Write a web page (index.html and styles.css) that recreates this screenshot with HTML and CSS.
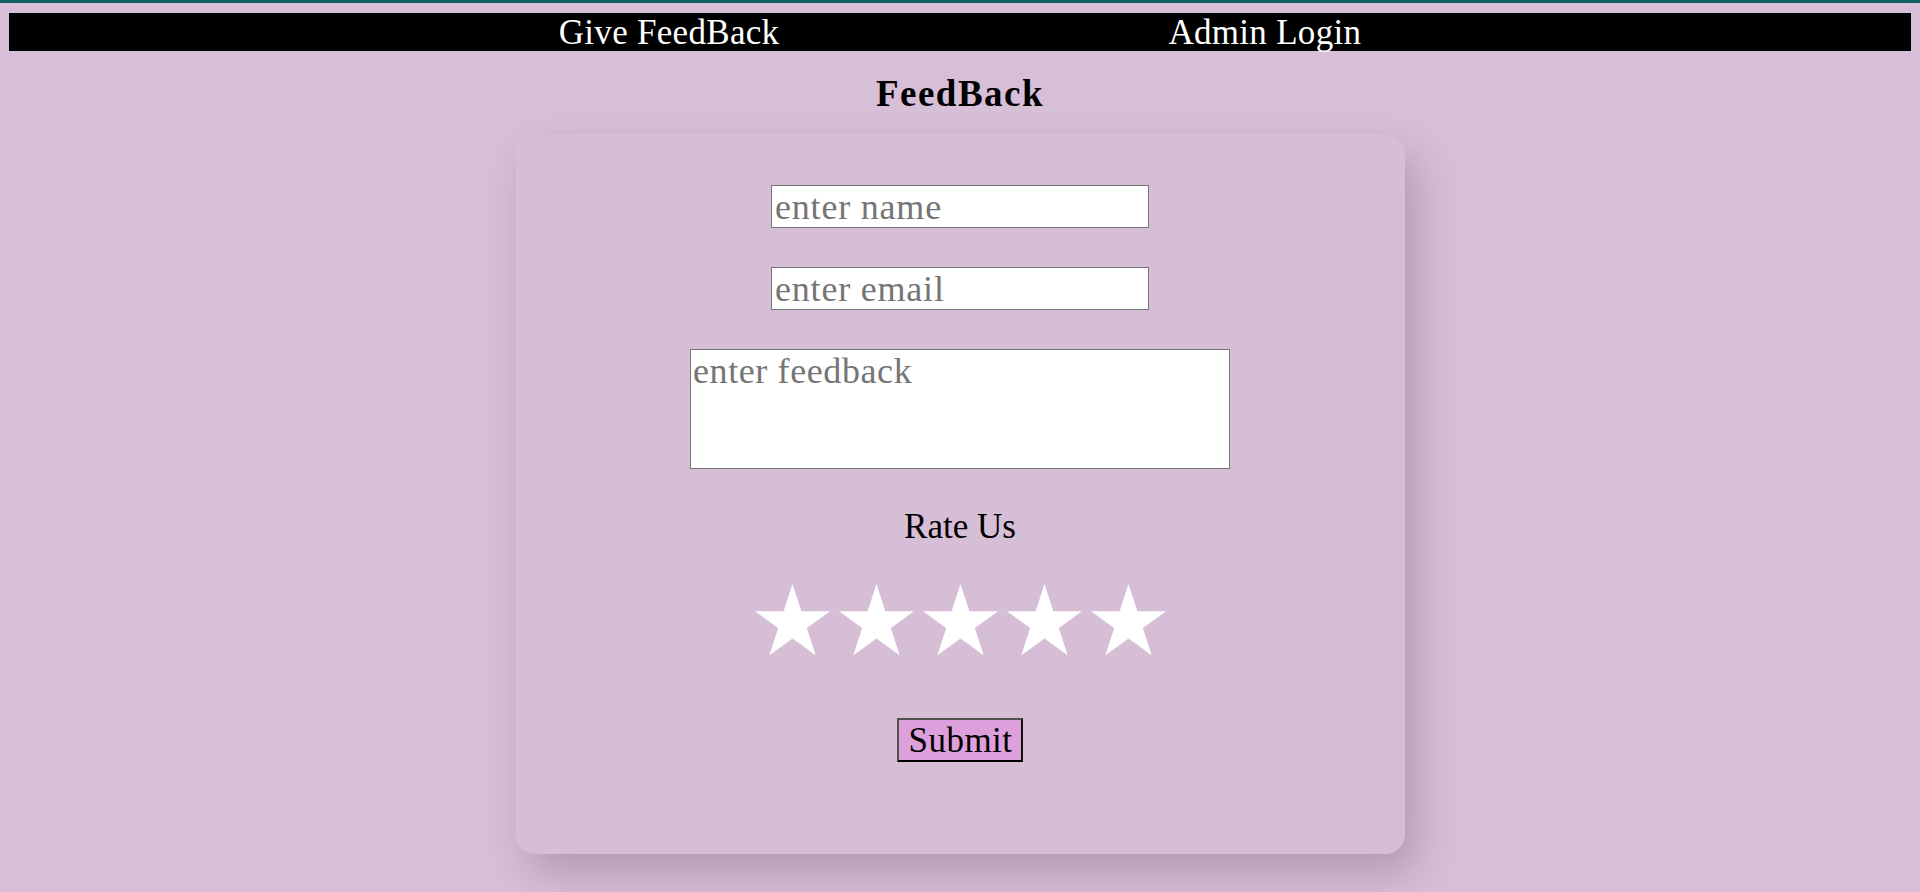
FILE: index.html
```html
<!DOCTYPE html>
<html lang="en">
<head>
<meta charset="utf-8">
<title>FeedBack</title>
<link rel="stylesheet" href="styles.css">
</head>
<body>
<div class="topline"></div>
<nav class="nav">
  <a class="nav-link" href="#">Give FeedBack</a>
  <a class="nav-link" href="#">Admin Login</a>
</nav>
<h1 class="title">FeedBack</h1>
<form class="card">
  <input class="field" type="text" placeholder="enter name">
  <input class="field field-email" type="email" placeholder="enter email">
  <textarea class="area" placeholder="enter feedback"></textarea>
  <div class="rate">Rate Us</div>
  <div class="stars">
    <svg class="star" viewBox="0 0 75 72"><polygon points="37.5,0 46.35,27.22 74.97,27.23 51.81,44.05 60.66,71.27 37.5,54.45 14.34,71.27 23.19,44.05 0.03,27.23 28.65,27.22"/></svg>
    <svg class="star" viewBox="0 0 75 72"><polygon points="37.5,0 46.35,27.22 74.97,27.23 51.81,44.05 60.66,71.27 37.5,54.45 14.34,71.27 23.19,44.05 0.03,27.23 28.65,27.22"/></svg>
    <svg class="star" viewBox="0 0 75 72"><polygon points="37.5,0 46.35,27.22 74.97,27.23 51.81,44.05 60.66,71.27 37.5,54.45 14.34,71.27 23.19,44.05 0.03,27.23 28.65,27.22"/></svg>
    <svg class="star" viewBox="0 0 75 72"><polygon points="37.5,0 46.35,27.22 74.97,27.23 51.81,44.05 60.66,71.27 37.5,54.45 14.34,71.27 23.19,44.05 0.03,27.23 28.65,27.22"/></svg>
    <svg class="star" viewBox="0 0 75 72"><polygon points="37.5,0 46.35,27.22 74.97,27.23 51.81,44.05 60.66,71.27 37.5,54.45 14.34,71.27 23.19,44.05 0.03,27.23 28.65,27.22"/></svg>
  </div>
  <button class="submit" type="button">Submit</button>
</form>
</body>
</html>
```
FILE: styles.css
```css
html, body {
  margin: 0;
  padding: 0;
}
body {
  background: #d8bfd8;
  font-family: "Liberation Serif", "Times New Roman", serif;
  color: #000;
  height: 892px;
  overflow: hidden;
}
.topline {
  height: 3px;
  background: #106068;
}
.nav {
  margin: 10px 9px 0;
  height: 38px;
  background: #000;
  display: flex;
  justify-content: center;
  gap: 389px;
}
.nav-link {
  color: #fff;
  text-decoration: none;
  font-size: 35px;
  letter-spacing: 0.3px;
  line-height: 39px;
}
.title {
  margin: 23px 0 20px;
  font-size: 37px;
  line-height: 40px;
  letter-spacing: 1.5px;
  font-weight: bold;
  text-align: center;
}
.card {
  box-sizing: border-box;
  width: 889px;
  height: 720px;
  margin: 0 auto;
  padding-top: 51px;
  border-radius: 20px;
  background: #d7bed7;
  box-shadow: 12px 20px 40px rgba(60, 20, 60, 0.22);
  display: flex;
  flex-direction: column;
  align-items: center;
}
.field {
  box-sizing: border-box;
  width: 378px;
  height: 43px;
  margin: 0 0 39px;
  padding: 0 3px;
  border: 1px solid #767676;
  background: #fff;
  font-family: "Liberation Serif", serif;
  font-size: 36px;
  letter-spacing: 0.8px;
  outline: none;
}
.area {
  box-sizing: border-box;
  width: 540px;
  height: 120px;
  padding: 1px 2px;
  border: 1px solid #767676;
  background: #fff;
  font-family: "Liberation Serif", serif;
  font-size: 36px;
  line-height: 40px;
  letter-spacing: 0.6px;
  resize: none;
  outline: none;
}
.field::placeholder, .area::placeholder {
  color: #757575;
}
.rate {
  margin-top: 38px;
  font-size: 35px;
  line-height: 40px;
}
.stars {
  margin-top: 37px;
  display: flex;
  gap: 9px;
}
.star {
  width: 75px;
  height: 72px;
  fill: #fff;
  display: block;
}
.submit {
  box-sizing: border-box;
  margin-top: 62px;
  width: 126px;
  height: 44px;
  padding: 1px 0 0 1px;
  background: #dda0dd;
  border-style: solid;
  border-width: 2px;
  border-color: #505050 #111 #000 #505050;
  font-family: "Liberation Serif", serif;
  font-size: 35px;
  letter-spacing: 0.5px;
  line-height: 38px;
  color: #000;
}
```
